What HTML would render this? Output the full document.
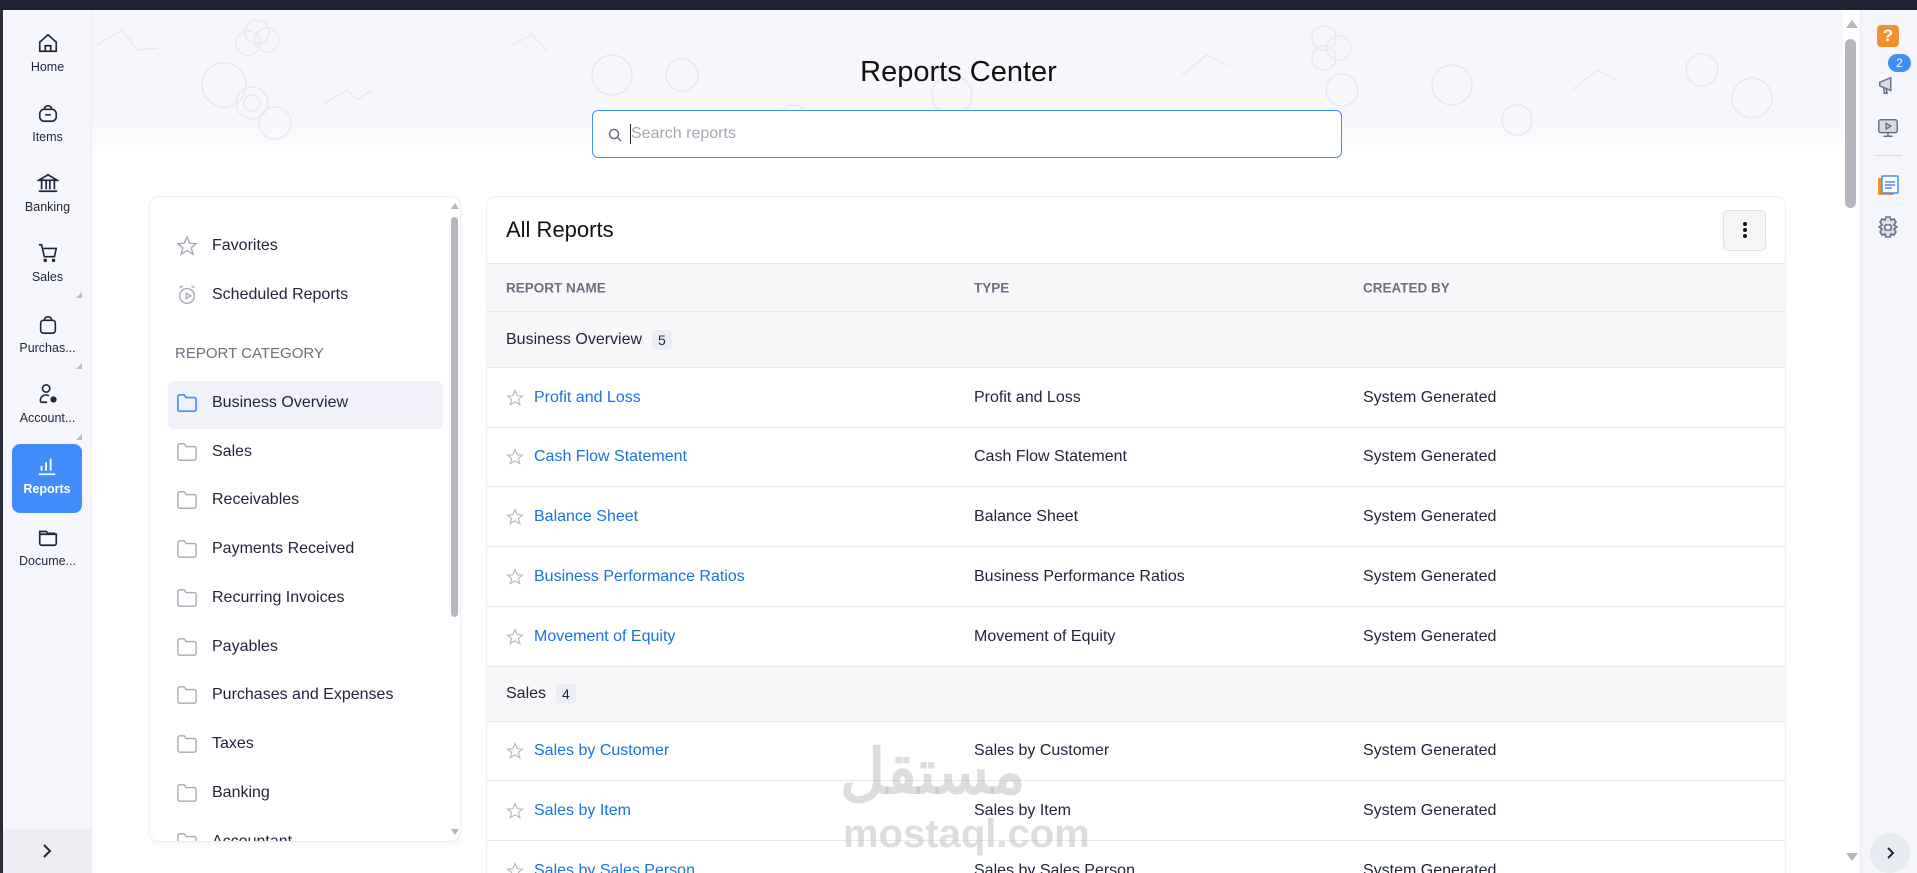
<!DOCTYPE html>
<html><head><meta charset="utf-8"><style>
*{box-sizing:border-box;margin:0;padding:0}
html{width:1917px;height:873px;overflow:hidden}
body{width:1917px;height:873px;overflow:hidden;background:#fff;font-family:"Liberation Sans",sans-serif;position:relative;color:#21263c}
.top{position:absolute;left:0;top:0;width:1917px;height:10px;background:#1f2235}
.lb{position:absolute;left:0;top:10px;width:3px;height:863px;background:#2a2c3a}
.side{position:absolute;left:3px;top:10px;width:89px;height:863px;background:#f6f7fc;border-right:1px solid #eceef5}
.si{position:absolute;left:0;width:89px;text-align:center;font-size:12.5px;color:#21263c}
.si svg{display:block;margin:0 auto 6px}
.tri{position:absolute;left:73px;width:0;height:0;border-left:6px solid transparent;border-bottom:6px solid #b8bbc8}
.rep{position:absolute;left:9px;top:434px;width:70px;height:69px;background:#408dfb;border-radius:8px;color:#fff;font-weight:bold;text-align:center;font-size:12.5px}
.sbot{position:absolute;left:0;bottom:0;width:89px;height:44px;background:#eceef4}
.hero{position:absolute;left:92px;top:10px;width:1751px;height:150px;background:linear-gradient(#f6f6fb,#f8f8fc 75%,#fff)}
h1{position:absolute;left:0;width:1917px;top:56px;text-align:center;font-size:29px;font-weight:normal;color:#111}
.search{position:absolute;left:592px;top:110px;width:750px;height:48px;border:1px solid #408dfb;border-radius:6px;background:#fff}
.search span{position:absolute;left:38px;top:14px;font-size:16px;color:#a4a7b4}
.lp{position:absolute;left:149px;top:196px;width:312px;height:646px;border:1px solid #eceef5;border-radius:10px;background:#fff;overflow:hidden;box-shadow:0 2px 6px rgba(0,0,0,.04)}
.lpi{position:absolute;left:26px;font-size:16px;color:#21263c;display:flex;align-items:center;gap:14px}
.sel{position:absolute;left:18px;top:184px;width:275px;height:48px;background:#f0f1f9;border-radius:6px}
.sb{position:absolute;left:301px;top:20px;width:7px;height:400px;background:#b6b6bf;border-radius:4px}
.mp{position:absolute;left:486px;top:196px;width:1300px;height:677px;border:1px solid #eceef5;border-bottom:none;border-radius:10px 10px 0 0;background:#fff;overflow:hidden}
.row{position:absolute;left:0;width:1300px;border-top:1px solid #e7e8f0;font-size:16px}
.row span{position:absolute;top:50%;transform:translateY(-50%);white-space:nowrap}
.c1{left:19px}.c2{left:487px}.c3{left:876px}
a{color:#1a73e0;text-decoration:none}
.badge{display:inline-block;background:#eceef6;border-radius:4px;padding:2px 6px;font-size:14px;margin-left:10px}
.gr{background:#f8f8fb}
.star{position:absolute;left:19px;top:50%;transform:translateY(-50%)}
.rs{position:absolute;left:1860px;top:10px;width:57px;height:863px;background:#f5f6fb;border-left:1px solid #e6e8f0}
</style></head><body>
<div class="top"></div><div class="lb"></div>
<div class="hero">
<svg width="1751" height="150" style="position:absolute;left:0;top:0" fill="none" stroke="#e8e9f5" stroke-width="1.5">
<circle cx="160" cy="93" r="16"/><circle cx="160" cy="93" r="8"/><circle cx="132" cy="75" r="22"/><circle cx="183" cy="113" r="16"/>
<circle cx="165" cy="22" r="12"/><circle cx="175" cy="30" r="12"/><circle cx="156" cy="33" r="12"/>
<path d="M5 35 L30 20 L45 40 L65 38"/><path d="M230 95 L255 80 L265 90 L280 80"/>
<circle cx="520" cy="65" r="20"/><circle cx="590" cy="65" r="16"/><circle cx="702" cy="110" r="15"/><circle cx="860" cy="85" r="20"/>
<circle cx="1232" cy="28" r="12"/><circle cx="1247" cy="38" r="12"/><circle cx="1232" cy="48" r="12"/><circle cx="1250" cy="80" r="16"/>
<circle cx="1360" cy="75" r="20"/><circle cx="1425" cy="110" r="15"/><circle cx="1610" cy="60" r="16"/><circle cx="1660" cy="88" r="20"/>
<path d="M1090 65 L1115 45 L1135 55"/><path d="M1480 80 L1505 60 L1525 70"/><path d="M420 35 L440 25 L455 40"/>
</svg></div>
<div class="side">
<div class="si" style="top:22px"><svg width="22" height="22" viewBox="0 0 24 24" fill="none" stroke="#21263c" stroke-width="1.8"><path d="M3 11 L12 3 L21 11 V21 H3 Z M9 21 V15 H15 V21"/></svg>Home</div>
<div class="si" style="top:92px"><svg width="22" height="22" viewBox="0 0 24 24" fill="none" stroke="#21263c" stroke-width="1.8"><rect x="3" y="8" width="18" height="13" rx="5"/><path d="M8 8 a4 4 0 0 1 8 0 M9 14 H15"/></svg>Items</div>
<div class="si" style="top:162px"><svg width="22" height="22" viewBox="0 0 24 24" fill="none" stroke="#21263c" stroke-width="1.8"><path d="M2 9 L12 3 L22 9 Z M5 10 V19 M10 10 V19 M14 10 V19 M19 10 V19 M2 21 H22"/></svg>Banking</div>
<div class="si" style="top:232px"><svg width="22" height="22" viewBox="0 0 24 24" fill="none" stroke="#21263c" stroke-width="1.8"><path d="M2 3 H5 L8 16 H19 L21 7 H7"/><circle cx="9" cy="20" r="1"/><circle cx="18" cy="20" r="1"/></svg>Sales</div>
<div class="tri" style="top:282px"></div>
<div class="si" style="top:303px"><svg width="22" height="22" viewBox="0 0 24 24" fill="none" stroke="#21263c" stroke-width="1.8"><rect x="4" y="8" width="16" height="14" rx="3"/><path d="M8 8 a4 4 0 0 1 8 0"/></svg>Purchas...</div>
<div class="tri" style="top:353px"></div>
<div class="si" style="top:373px"><svg width="22" height="22" viewBox="0 0 24 24" fill="none" stroke="#21263c" stroke-width="1.8"><circle cx="10" cy="6" r="4"/><path d="M4 21 a6 6 0 0 1 9 -7 M4 21 H11"/><circle cx="18" cy="18" r="2.5" fill="#21263c"/></svg>Account...</div>
<div class="tri" style="top:424px"></div>
<div class="rep"><svg width="22" height="22" viewBox="0 0 24 24" fill="none" stroke="#fff" stroke-width="2" style="display:block;margin:11px auto 5px"><path d="M3 21 H21 M6 17 V12 M11 17 V8 M16 17 V4"/></svg>Reports</div>
<div class="si" style="top:516px"><svg width="22" height="22" viewBox="0 0 24 24" fill="none" stroke="#21263c" stroke-width="1.8"><path d="M3 9 V6 H10 L12 8 H19 V10 M3 9 H21 V19 a2 2 0 0 1 -2 2 H5 a2 2 0 0 1 -2 -2 Z"/></svg>Docume...</div>
<div class="sbot"><svg width="14" height="14" viewBox="0 0 14 14" style="position:absolute;left:37px;top:15px" fill="none" stroke="#21263c" stroke-width="2"><path d="M4 1 L10 7 L4 13"/></svg></div>
</div>
<h1>Reports Center</h1>
<div class="search"><svg width="14" height="14" viewBox="0 0 14 14" style="position:absolute;left:15px;top:17px" fill="none" stroke="#6b6f80" stroke-width="1.5"><circle cx="6" cy="6" r="4.5"/><path d="M9.5 9.5 L13 13"/></svg><div style="position:absolute;left:37px;top:13px;width:1px;height:20px;background:#222"></div><span>Search reports</span></div>

<div class="lp">
<div class="sb"></div>
<div style="position:absolute;left:301px;top:6px;border-left:4px solid transparent;border-right:4px solid transparent;border-bottom:6px solid #b6b6bf"></div>
<div style="position:absolute;left:301px;bottom:6px;border-left:4px solid transparent;border-right:4px solid transparent;border-top:6px solid #b6b6bf"></div>
<div class="lpi" style="top:38px"><svg width="22" height="22" viewBox="0 0 24 24" fill="none" stroke="#a6a8b4" stroke-width="1.5"><path d="M12 2 L15 9 L22 9.5 L16.5 14 L18.5 21 L12 17 L5.5 21 L7.5 14 L2 9.5 L9 9 Z"/></svg>Favorites</div>
<div class="lpi" style="top:87px"><svg width="22" height="22" viewBox="0 0 24 24" fill="none" stroke="#a6a8b4" stroke-width="1.5"><circle cx="12" cy="13" r="8"/><path d="M4 4 L7 2 M20 4 L17 2 M11 10 L16 13 L11 16 Z"/></svg>Scheduled Reports</div>
<div style="position:absolute;left:25px;top:148px;font-size:15px;color:#6b6f80">REPORT CATEGORY</div>
<div class="sel"></div>
<div class="lpi" style="top:196px"><svg width="22" height="20" viewBox="0 0 24 22" fill="none" stroke="#408dfb" stroke-width="1.8"><path d="M2 4 a2 2 0 0 1 2 -2 H9 L11 5 H20 a2 2 0 0 1 2 2 V18 a2 2 0 0 1 -2 2 H4 a2 2 0 0 1 -2 -2 Z"/></svg>Business Overview</div>
<div class="lpi" style="top:245px"><svg width="22" height="20" viewBox="0 0 24 22" fill="none" stroke="#a6a8b4" stroke-width="1.5"><path d="M2 4 a2 2 0 0 1 2 -2 H9 L11 5 H20 a2 2 0 0 1 2 2 V18 a2 2 0 0 1 -2 2 H4 a2 2 0 0 1 -2 -2 Z"/></svg>Sales</div>
<div class="lpi" style="top:293px"><svg width="22" height="20" viewBox="0 0 24 22" fill="none" stroke="#a6a8b4" stroke-width="1.5"><path d="M2 4 a2 2 0 0 1 2 -2 H9 L11 5 H20 a2 2 0 0 1 2 2 V18 a2 2 0 0 1 -2 2 H4 a2 2 0 0 1 -2 -2 Z"/></svg>Receivables</div>
<div class="lpi" style="top:342px"><svg width="22" height="20" viewBox="0 0 24 22" fill="none" stroke="#a6a8b4" stroke-width="1.5"><path d="M2 4 a2 2 0 0 1 2 -2 H9 L11 5 H20 a2 2 0 0 1 2 2 V18 a2 2 0 0 1 -2 2 H4 a2 2 0 0 1 -2 -2 Z"/></svg>Payments Received</div>
<div class="lpi" style="top:391px"><svg width="22" height="20" viewBox="0 0 24 22" fill="none" stroke="#a6a8b4" stroke-width="1.5"><path d="M2 4 a2 2 0 0 1 2 -2 H9 L11 5 H20 a2 2 0 0 1 2 2 V18 a2 2 0 0 1 -2 2 H4 a2 2 0 0 1 -2 -2 Z"/></svg>Recurring Invoices</div>
<div class="lpi" style="top:440px"><svg width="22" height="20" viewBox="0 0 24 22" fill="none" stroke="#a6a8b4" stroke-width="1.5"><path d="M2 4 a2 2 0 0 1 2 -2 H9 L11 5 H20 a2 2 0 0 1 2 2 V18 a2 2 0 0 1 -2 2 H4 a2 2 0 0 1 -2 -2 Z"/></svg>Payables</div>
<div class="lpi" style="top:488px"><svg width="22" height="20" viewBox="0 0 24 22" fill="none" stroke="#a6a8b4" stroke-width="1.5"><path d="M2 4 a2 2 0 0 1 2 -2 H9 L11 5 H20 a2 2 0 0 1 2 2 V18 a2 2 0 0 1 -2 2 H4 a2 2 0 0 1 -2 -2 Z"/></svg>Purchases and Expenses</div>
<div class="lpi" style="top:537px"><svg width="22" height="20" viewBox="0 0 24 22" fill="none" stroke="#a6a8b4" stroke-width="1.5"><path d="M2 4 a2 2 0 0 1 2 -2 H9 L11 5 H20 a2 2 0 0 1 2 2 V18 a2 2 0 0 1 -2 2 H4 a2 2 0 0 1 -2 -2 Z"/></svg>Taxes</div>
<div class="lpi" style="top:586px"><svg width="22" height="20" viewBox="0 0 24 22" fill="none" stroke="#a6a8b4" stroke-width="1.5"><path d="M2 4 a2 2 0 0 1 2 -2 H9 L11 5 H20 a2 2 0 0 1 2 2 V18 a2 2 0 0 1 -2 2 H4 a2 2 0 0 1 -2 -2 Z"/></svg>Banking</div>
<div class="lpi" style="top:635px"><svg width="22" height="20" viewBox="0 0 24 22" fill="none" stroke="#a6a8b4" stroke-width="1.5"><path d="M2 4 a2 2 0 0 1 2 -2 H9 L11 5 H20 a2 2 0 0 1 2 2 V18 a2 2 0 0 1 -2 2 H4 a2 2 0 0 1 -2 -2 Z"/></svg>Accountant</div>
</div>

<div class="mp">
<div style="position:absolute;left:19px;top:20px;font-size:22px;color:#111">All Reports</div>
<div style="position:absolute;left:1236px;top:13px;width:43px;height:41px;border:1px solid #e0e1e8;border-radius:5px;background:#f5f5f7"><div style="position:absolute;left:19px;top:11px;width:4px;height:4px;border-radius:2px;background:#111;box-shadow:0 6px 0 #111,0 12px 0 #111"></div></div>
<div class="row gr" style="top:66px;height:48px;font-size:13.5px;color:#6b6f80;font-weight:bold"><span class="c1">REPORT NAME</span><span class="c2">TYPE</span><span class="c3">CREATED BY</span></div>
<div class="row gr" style="top:114px;height:56px"><span class="c1">Business Overview<span class="badge">5</span></span></div>
<div class="row" style="top:170px;height:60px"><svg class="star" width="18" height="18" viewBox="0 0 24 24" fill="none" stroke="#b4b6c0" stroke-width="1.5"><path d="M12 2 L15 9 L22 9.5 L16.5 14 L18.5 21 L12 17 L5.5 21 L7.5 14 L2 9.5 L9 9 Z"/></svg><span style="left:47px"><a>Profit and Loss</a></span><span class="c2">Profit and Loss</span><span class="c3">System Generated</span></div>
<div class="row" style="top:230px;height:59px"><svg class="star" width="18" height="18" viewBox="0 0 24 24" fill="none" stroke="#b4b6c0" stroke-width="1.5"><path d="M12 2 L15 9 L22 9.5 L16.5 14 L18.5 21 L12 17 L5.5 21 L7.5 14 L2 9.5 L9 9 Z"/></svg><span style="left:47px"><a>Cash Flow Statement</a></span><span class="c2">Cash Flow Statement</span><span class="c3">System Generated</span></div>
<div class="row" style="top:289px;height:60px"><svg class="star" width="18" height="18" viewBox="0 0 24 24" fill="none" stroke="#b4b6c0" stroke-width="1.5"><path d="M12 2 L15 9 L22 9.5 L16.5 14 L18.5 21 L12 17 L5.5 21 L7.5 14 L2 9.5 L9 9 Z"/></svg><span style="left:47px"><a>Balance Sheet</a></span><span class="c2">Balance Sheet</span><span class="c3">System Generated</span></div>
<div class="row" style="top:349px;height:60px"><svg class="star" width="18" height="18" viewBox="0 0 24 24" fill="none" stroke="#b4b6c0" stroke-width="1.5"><path d="M12 2 L15 9 L22 9.5 L16.5 14 L18.5 21 L12 17 L5.5 21 L7.5 14 L2 9.5 L9 9 Z"/></svg><span style="left:47px"><a>Business Performance Ratios</a></span><span class="c2">Business Performance Ratios</span><span class="c3">System Generated</span></div>
<div class="row" style="top:409px;height:60px"><svg class="star" width="18" height="18" viewBox="0 0 24 24" fill="none" stroke="#b4b6c0" stroke-width="1.5"><path d="M12 2 L15 9 L22 9.5 L16.5 14 L18.5 21 L12 17 L5.5 21 L7.5 14 L2 9.5 L9 9 Z"/></svg><span style="left:47px"><a>Movement of Equity</a></span><span class="c2">Movement of Equity</span><span class="c3">System Generated</span></div>
<div class="row gr" style="top:469px;height:55px"><span class="c1">Sales<span class="badge">4</span></span></div>
<div class="row" style="top:524px;height:59px"><svg class="star" width="18" height="18" viewBox="0 0 24 24" fill="none" stroke="#b4b6c0" stroke-width="1.5"><path d="M12 2 L15 9 L22 9.5 L16.5 14 L18.5 21 L12 17 L5.5 21 L7.5 14 L2 9.5 L9 9 Z"/></svg><span style="left:47px"><a>Sales by Customer</a></span><span class="c2">Sales by Customer</span><span class="c3">System Generated</span></div>
<div class="row" style="top:583px;height:60px"><svg class="star" width="18" height="18" viewBox="0 0 24 24" fill="none" stroke="#b4b6c0" stroke-width="1.5"><path d="M12 2 L15 9 L22 9.5 L16.5 14 L18.5 21 L12 17 L5.5 21 L7.5 14 L2 9.5 L9 9 Z"/></svg><span style="left:47px"><a>Sales by Item</a></span><span class="c2">Sales by Item</span><span class="c3">System Generated</span></div>
<div class="row" style="top:643px;height:60px"><svg class="star" width="18" height="18" viewBox="0 0 24 24" fill="none" stroke="#b4b6c0" stroke-width="1.5"><path d="M12 2 L15 9 L22 9.5 L16.5 14 L18.5 21 L12 17 L5.5 21 L7.5 14 L2 9.5 L9 9 Z"/></svg><span style="left:47px"><a>Sales by Sales Person</a></span><span class="c2">Sales by Sales Person</span><span class="c3">System Generated</span></div>
</div>
<div style="position:absolute;left:840px;top:735px;font-size:62px;font-weight:bold;color:rgba(180,180,180,.45);font-family:'Liberation Sans','Noto Sans CJK SC',sans-serif">مستقل</div>
<div style="position:absolute;left:843px;top:812px;font-size:40px;font-weight:bold;color:rgba(180,180,180,.45)">mostaql.com</div>

<div style="position:absolute;left:1843px;top:10px;width:17px;height:863px;background:#fff"></div>
<div style="position:absolute;left:1846px;top:20px;border-left:6px solid transparent;border-right:6px solid transparent;border-bottom:8px solid #b6b6bf"></div>
<div style="position:absolute;left:1845px;top:39px;width:11px;height:169px;border-radius:6px;background:#b6b6bf"></div>
<div style="position:absolute;left:1846px;top:853px;border-left:6px solid transparent;border-right:6px solid transparent;border-top:8px solid #b6b6bf"></div>
<div class="rs">
<div style="position:absolute;left:16px;top:15px;width:22px;height:22px;background:#f0912f;border-radius:4px;color:#fff;font-weight:bold;font-size:17px;text-align:center;line-height:22px">?</div>
<svg width="22" height="22" viewBox="0 0 24 24" style="position:absolute;left:16px;top:64px" fill="#d8dbe6" stroke="#6b6f85" stroke-width="1.6"><path d="M3 9 L15 4 V18 L3 13 Z M7 14 L8 21 H11 L10 15"/></svg>
<div style="position:absolute;left:27px;top:44px;width:23px;height:18px;background:#408dfb;border-radius:9px;color:#fff;font-size:12px;text-align:center;line-height:18px">2</div>
<svg width="22" height="22" viewBox="0 0 24 24" style="position:absolute;left:16px;top:107px" fill="#d8dbe6" stroke="#6b6f85" stroke-width="1.6"><rect x="2" y="3" width="20" height="14" rx="2"/><path d="M12 17 V21 M7 21 H17 M10 7 L15 10 L10 13 Z" fill="none"/></svg>
<div style="position:absolute;left:14px;top:145px;width:27px;height:1px;background:#d6d8e2"></div>
<svg width="24" height="24" viewBox="0 0 24 24" style="position:absolute;left:15px;top:164px"><rect x="2" y="4" width="16" height="17" rx="1" fill="#f0912f"/><rect x="6" y="2" width="16" height="17" rx="1" fill="#fff" stroke="#408dfb" stroke-width="1.5"/><path d="M9 8 H19 M9 11 H19 M9 14 H16" stroke="#408dfb" stroke-width="1.5"/></svg>
<svg width="24" height="24" viewBox="0 0 24 24" style="position:absolute;left:15px;top:205px" fill="#d8dbe6" stroke="#6b6f85" stroke-width="1.6"><path d="M10 2 H14 L15 5 L18 4 L20 7 L18 10 L21 12 L18 14 L20 17 L18 20 L15 19 L14 22 H10 L9 19 L6 20 L4 17 L6 14 L3 12 L6 10 L4 7 L6 4 L9 5 Z"/><rect x="9" y="10" width="6" height="5" rx="1" fill="#fff"/></svg>
<div style="position:absolute;left:9px;top:823px;width:40px;height:40px;border-radius:20px;background:#e8eaf2"><svg width="12" height="12" viewBox="0 0 12 12" style="position:absolute;left:15px;top:14px" fill="none" stroke="#21263c" stroke-width="2"><path d="M3 1 L8 6 L3 11"/></svg></div>
</div>
</body></html>
